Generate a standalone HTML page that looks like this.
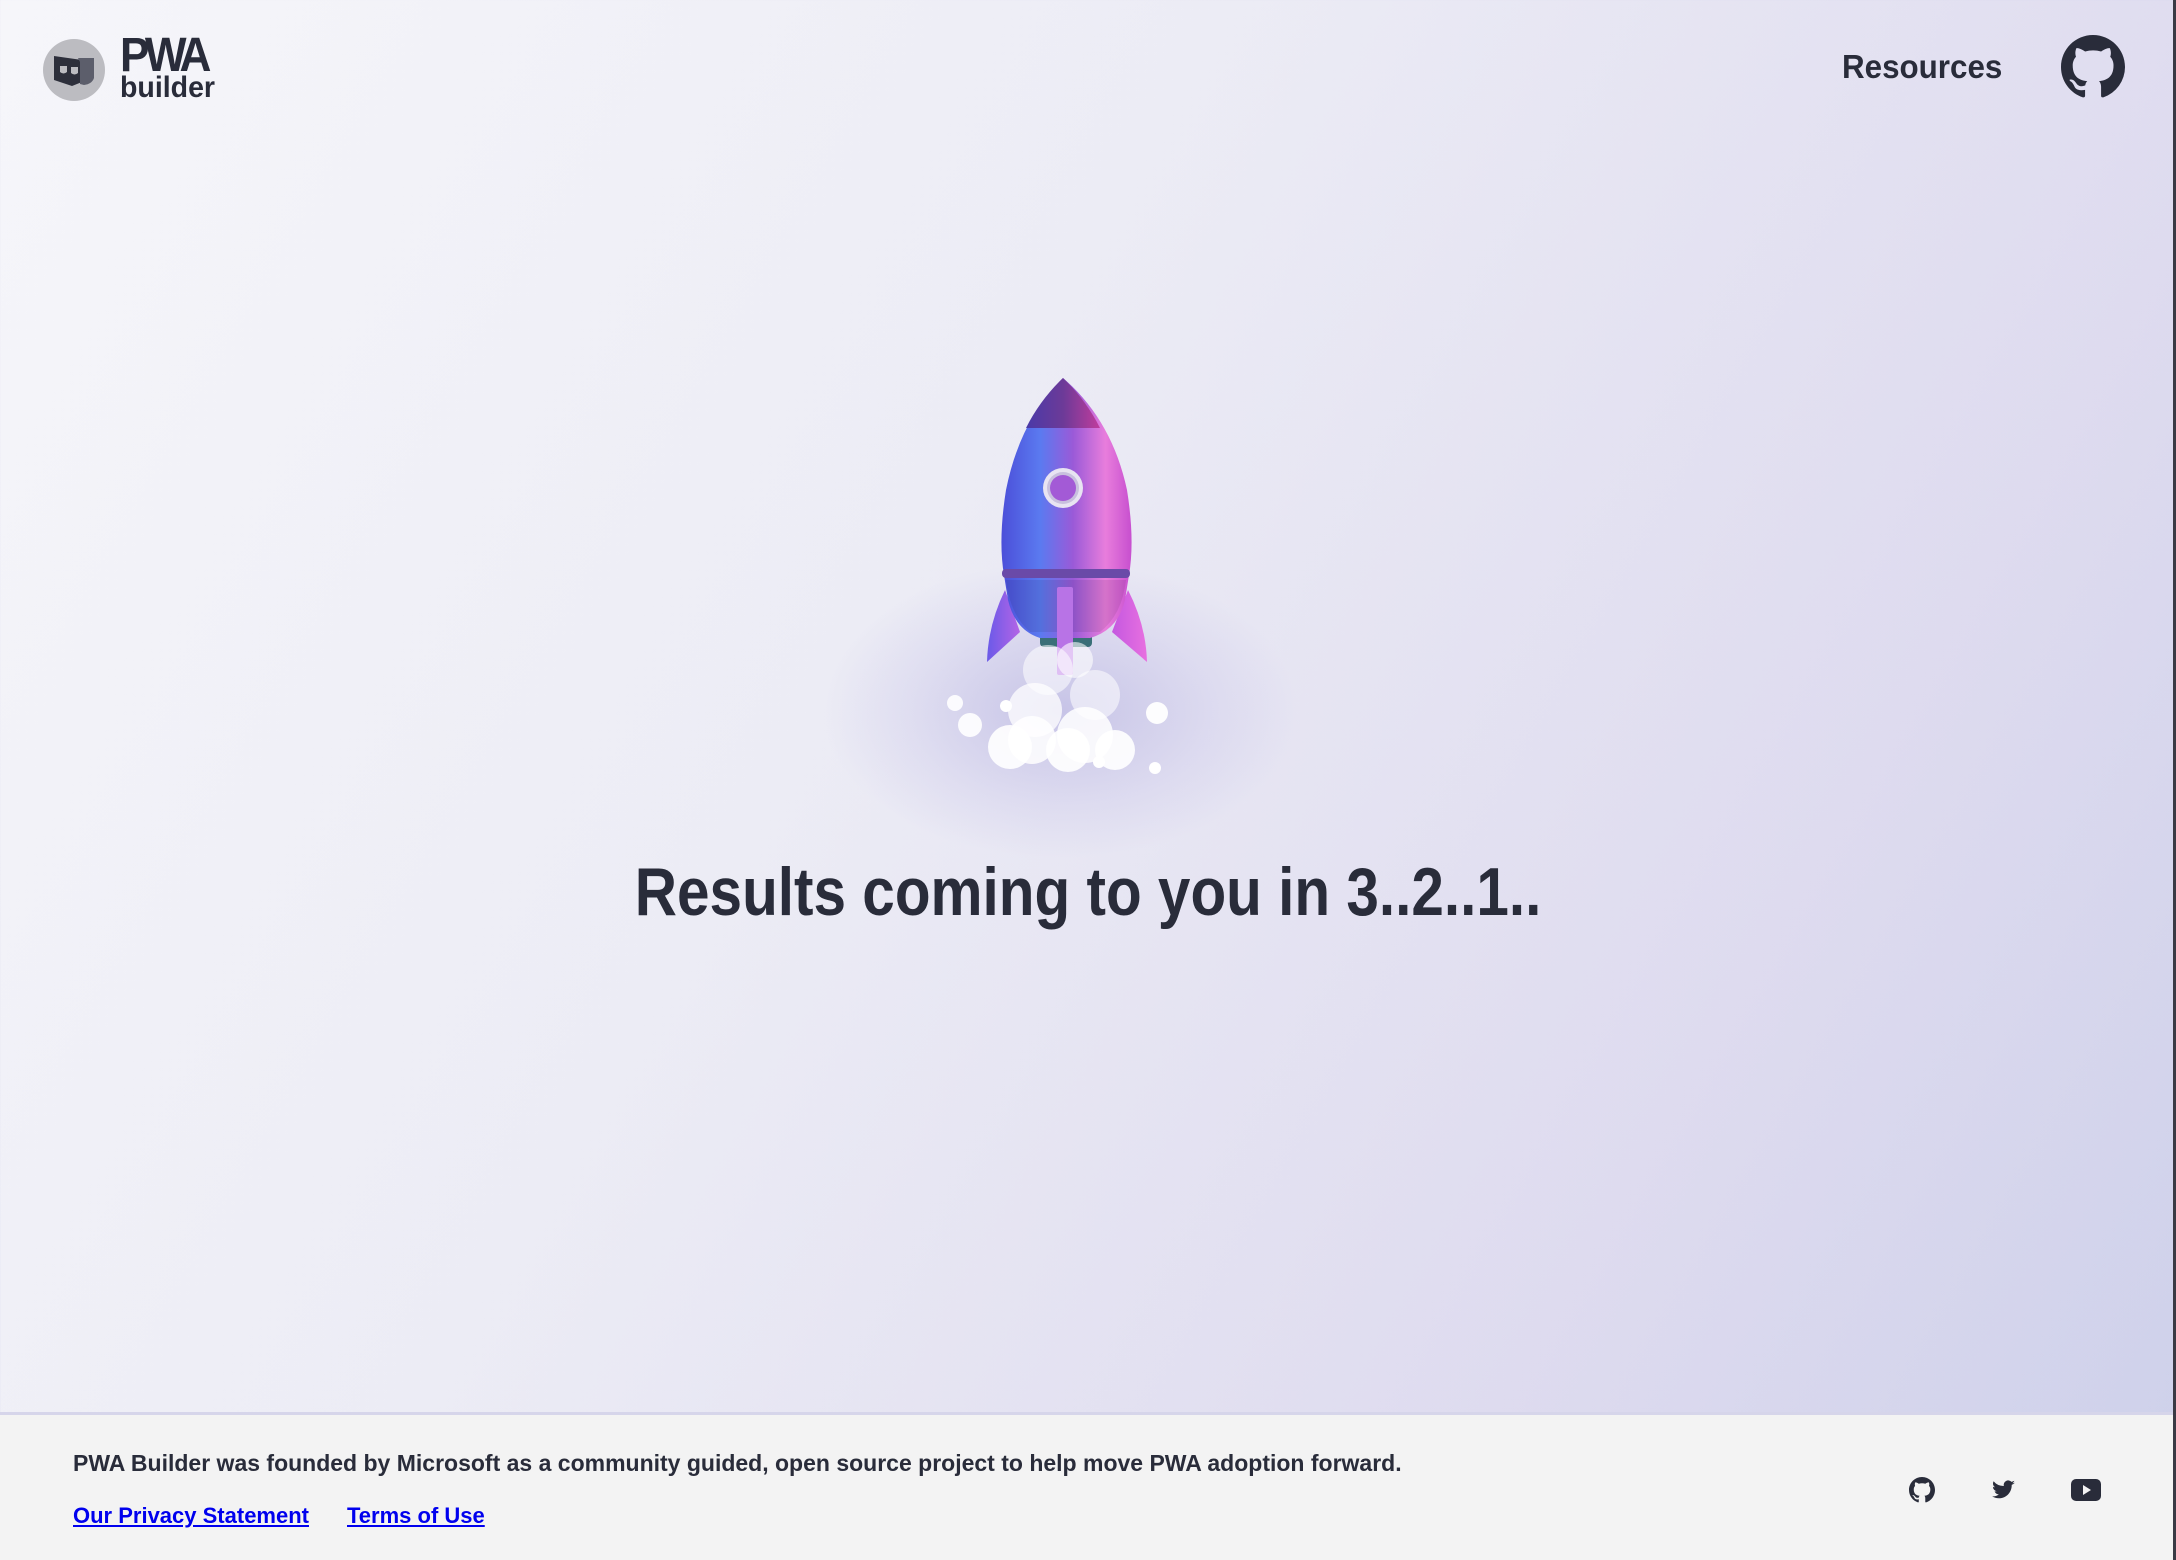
<!DOCTYPE html>
<html><head><meta charset="utf-8"><style>
html,body{margin:0;padding:0;width:2176px;height:1560px;overflow:hidden;font-family:"Liberation Sans",sans-serif;}
body{position:relative;background:linear-gradient(120deg,#f6f6fa 0%,#ececf5 40%,#dedbef 75%,#cdd0ea 100%);}
.glow{position:absolute;left:820px;top:560px;width:480px;height:300px;border-radius:50%;background:radial-gradient(ellipse at center,rgba(170,165,220,.55) 0%,rgba(190,185,230,.25) 45%,rgba(200,200,235,0) 70%);}
.abs{position:absolute;}
.pwa{left:120px;top:32px;font-weight:bold;font-size:48px;color:#292c3a;letter-spacing:-5px;line-height:48px;transform:scaleX(.92);transform-origin:left;}
.bld{left:120px;top:72px;font-weight:bold;font-size:30px;color:#292c3a;line-height:32px;transform:scaleX(.95);transform-origin:left;}
.res{left:1842px;top:47px;font-weight:bold;font-size:33px;color:#292c3a;line-height:40px;transform:scaleX(.95);transform-origin:left;}
.head{left:0;width:2176px;top:852px;text-align:center;}
.head span{display:inline-block;font-weight:bold;font-size:68px;color:#292c3a;transform:scaleX(.86);white-space:nowrap;line-height:80px;}
.footer{position:absolute;left:0;top:1412px;width:2176px;height:148px;background:#f3f3f3;border-top:3px solid #d6d5ea;}
.ft{position:absolute;left:73px;top:35px;font-size:23px;font-weight:bold;color:#292c3a;white-space:nowrap;}
.ln{position:absolute;top:88px;font-size:22px;font-weight:bold;color:#0000ee;text-decoration:underline;white-space:nowrap;}
.edge{position:absolute;right:0;top:0;width:3px;height:1560px;background:#3a3a44;}
</style></head><body>
<div class="glow"></div>

<svg class="abs" style="left:42px;top:38px" width="64" height="64" viewBox="0 0 64 64">
<circle cx="32" cy="32" r="31" fill="#bcbcc1"/>
<path d="M12 18 L40 22 L40 44 L30 48 L12 42 Z" fill="#2d2f3b"/>
<path d="M36 20 L52 20 L52 40 Q50 46 42 47 L38 46 L38 24 Z" fill="#5c5e6b"/>
<path d="M18 28 h7 v6 q-3.5 3 -7 0 z" fill="#bcbcc1"/>
<path d="M29 29 h7 v6 q-3.5 3 -7 0 z" fill="#bcbcc1"/>
</svg>
<div class="abs pwa">PWA</div>
<div class="abs bld">builder</div>

<div class="abs res">Resources</div>
<svg class="abs" style="left:2061px;top:35px" width="64" height="64" viewBox="0 0 16 16">
<path fill="#292c3a" d="M8 0C3.58 0 0 3.58 0 8c0 3.54 2.29 6.53 5.47 7.59.4.07.55-.17.55-.38v-1.49c-2.01.37-2.53-.49-2.69-.94-.09-.23-.48-.94-.82-1.13-.28-.15-.68-.52-.01-.53.63-.01 1.08.58 1.23.82.72 1.21 1.87.87 2.33.66.07-.52.28-.87.51-1.07-1.78-.2-3.64-.89-3.64-3.95 0-.87.31-1.59.82-2.15-.08-.2-.36-1.02.08-2.12 0 0 .67-.21 2.2.82a7.5 7.5 0 014 0c1.530-1.04 2.2-.82 2.2-.82.44 1.1.16 1.92.08 2.12.51.56.82 1.27.82 2.15 0 3.07-1.87 3.75-3.65 3.95.29.25.54.73.54 1.48v2.2c0 .21.15.46.55.38A8 8 0 0016 8c0-4.42-3.58-8-8-8z"/>
</svg>

<svg class="abs" style="left:900px;top:340px" width="400" height="460" viewBox="0 0 400 460">
<defs>
<linearGradient id="bg" x1="0" x2="1" y1="0" y2="0">
<stop offset="0" stop-color="#4b4fd9"/><stop offset=".3" stop-color="#5b7af0"/><stop offset=".55" stop-color="#9a5ad8"/><stop offset=".8" stop-color="#e87ddc"/><stop offset="1" stop-color="#c74fcf"/>
</linearGradient>
<linearGradient id="ng" x1="0" x2="1"><stop offset="0" stop-color="#4a3aa8"/><stop offset=".5" stop-color="#6c3a98"/><stop offset="1" stop-color="#c03c9c"/></linearGradient>
<linearGradient id="fl" x1="0" x2="1"><stop offset="0" stop-color="#6a5ae8"/><stop offset="1" stop-color="#b464e6"/></linearGradient>
<linearGradient id="fr" x1="0" x2="1"><stop offset="0" stop-color="#c458e0"/><stop offset="1" stop-color="#e870e0"/></linearGradient>
</defs>
<path d="M105 250 Q88 285 87 322 L120 292 Z" fill="url(#fl)"/>
<path d="M228 250 Q246 285 247 322 L212 292 Z" fill="url(#fr)"/>
<rect x="140" y="292" width="52" height="15" rx="4" fill="#3a6f78"/>
<path d="M163 38 Q120 80 106 150 Q98 200 104 235 L108 260 Q115 290 140 298 L190 298 Q218 290 225 260 L229 235 Q235 200 227 150 Q212 80 163 38 Z" fill="url(#bg)"/>
<path d="M163 38 Q140 60 126 88 L200 88 Q186 60 163 38 Z" fill="url(#ng)"/>
<path d="M106 240 Q110 275 130 292 L200 292 Q222 275 226 240 Z" fill="#000" opacity=".08"/>
<rect x="102" y="229" width="128" height="9" rx="4" fill="#6a4aa8"/>
<circle cx="163" cy="148" r="20" fill="#e8e4f2"/>
<circle cx="163" cy="148" r="16" fill="#c8c0de"/>
<circle cx="163" cy="148" r="13" fill="#a35ad6"/>
<rect x="157" y="247" width="16" height="88" rx="2" fill="#b873e6"/>
<g fill="#fff">
<circle cx="148" cy="330" r="25" opacity=".55"/><circle cx="175" cy="320" r="18" opacity=".6"/>
<circle cx="135" cy="370" r="27" opacity=".75"/><circle cx="195" cy="355" r="25" opacity=".55"/>
<circle cx="132" cy="400" r="24" opacity=".85"/><circle cx="185" cy="395" r="28" opacity=".85"/>
<circle cx="110" cy="407" r="22" opacity=".9"/><circle cx="168" cy="410" r="22" opacity=".9"/>
<circle cx="215" cy="410" r="20" opacity=".9"/>
<circle cx="55" cy="363" r="8" opacity=".9"/><circle cx="70" cy="385" r="12" opacity=".9"/>
<circle cx="106" cy="366" r="6"/><circle cx="257" cy="373" r="11" opacity=".95"/>
<circle cx="199" cy="422" r="6"/><circle cx="255" cy="428" r="6"/>
</g>
</svg>

<div class="abs head"><span>Results coming to you in 3..2..1..</span></div>

<div class="footer">
<div class="ft">PWA Builder was founded by Microsoft as a community guided, open source project to help move PWA adoption forward.</div>
<div class="ln" style="left:73px">Our Privacy Statement</div>
<div class="ln" style="left:347px">Terms of Use</div>
<svg class="abs" style="left:1909px;top:62px" width="26" height="26" viewBox="0 0 16 16"><path fill="#292c3a" d="M8 0C3.58 0 0 3.58 0 8c0 3.54 2.29 6.53 5.47 7.590.4.07.55-.17.55-.38v-1.49c-2.01.37-2.53-.49-2.69-.94-.09-.23-.48-.94-.82-1.13-.28-.15-.68-.52-.01-.53.63-.01 1.08.58 1.23.82.72 1.21 1.87.87 2.33.66.07-.52.28-.87.51-1.07-1.78-.2-3.64-.89-3.64-3.95 0-.87.31-1.59.82-2.15-.08-.2-.36-1.02.08-2.12 0 0 .67-.21 2.2.82a7.5 7.5 0 014 0c1.53-1.04 2.2-.82 2.2-.82.44 1.1.16 1.92.08 2.12.51.56.82 1.27.82 2.15 0 3.07-1.87 3.75-3.65 3.95.29.25.54.73.54 1.48v2.2c0 .21.15.46.55.38A8 8 0 0016 8c0-4.42-3.58-8-8-8z"/></svg>
<svg class="abs" style="left:1991px;top:63px" width="26" height="24" viewBox="0 0 24 24"><path fill="#292c3a" d="M23 4.6a9 9 0 01-2.6.7 4.5 4.5 0 002-2.5 9 9 0 01-2.9 1.1 4.5 4.5 0 00-7.7 4.1A12.8 12.8 0 011.6 3.3a4.5 4.5 0 001.4 6 4.5 4.5 0 01-2-.6 4.5 4.5 0 003.6 4.5 4.5 4.5 0 01-2 .1 4.5 4.5 0 004.2 3.1A9 9 0 010 18.3a12.8 12.8 0 006.9 2c8.3 0 12.8-6.9 12.8-12.8v-.6A9 9 0 0023 4.6z"/></svg>
<svg class="abs" style="left:2071px;top:63px" width="30" height="24" viewBox="0 0 30 24"><rect x="0" y="1" width="30" height="22" rx="5" fill="#292c3a"/><path d="M12 7 L20 12 L12 17 Z" fill="#f3f3f3"/></svg>
</div>
<div class="edge"></div>
</body></html>
